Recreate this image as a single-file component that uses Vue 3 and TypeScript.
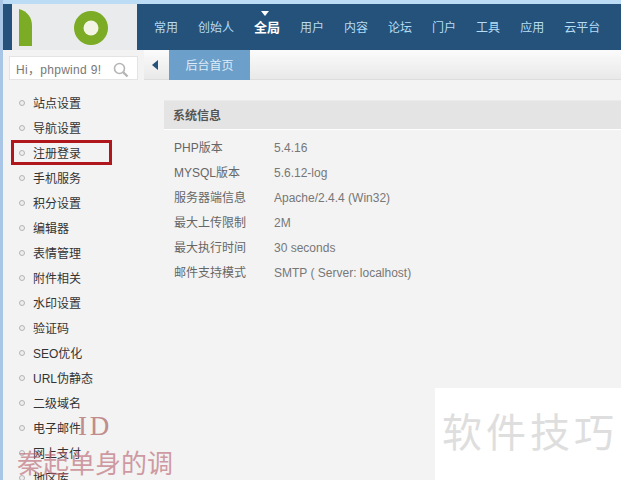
<script setup lang="ts">
const navItems: string[] = ['常用', '创始人', '全局', '用户', '内容', '论坛', '门户', '工具', '应用', '云平台']
const sideItems: string[] = ['站点设置', '导航设置', '注册登录', '手机服务', '积分设置', '编辑器', '表情管理', '附件相关', '水印设置', '验证码', 'SEO优化', 'URL伪静态', '二级域名', '电子邮件', '网上支付', '地区库']
const infoRows: [string, string][] = [
  ['PHP版本', '5.4.16'],
  ['MYSQL版本', '5.6.12-log'],
  ['服务器端信息', 'Apache/2.4.4 (Win32)'],
  ['最大上传限制', '2M'],
  ['最大执行时间', '30 seconds'],
  ['邮件支持模式', 'SMTP ( Server: localhost)'],
]
</script>

<template>
  <div class="page">
    <div class="topline"></div>
    <header class="header">
      <div class="logo">
        <svg width="125" height="46" viewBox="0 0 125 46">
          <path d="M7 5 C15 7 20 13 20 22 V42 H7 Z" fill="#7cab25" />
          <circle cx="79" cy="24" r="17" fill="#7cab25" />
          <circle cx="79" cy="24" r="7.5" fill="#f2f5e6" />
        </svg>
      </div>
      <nav class="nav">
        <a v-for="item in navItems" :key="item" class="nav-item" :class="{ active: item === '全局' }">{{ item }}</a>
      </nav>
    </header>
    <div class="body">
      <aside class="side">
        <div class="search">
          <span class="search-text">Hi，phpwind 9!</span>
          <svg width="16" height="16" viewBox="0 0 16 16" class="search-icon">
            <circle cx="6.5" cy="6.5" r="5" fill="none" stroke="#b5b5b5" stroke-width="1.6" />
            <path d="M10 10 L14.5 14.5" stroke="#b5b5b5" stroke-width="2.4" />
          </svg>
        </div>
        <ul class="menu">
          <li v-for="item in sideItems" :key="item" class="menu-item" :class="{ marked: item === '注册登录' }">
            <i class="dot"></i>{{ item }}
          </li>
        </ul>
      </aside>
      <main class="main">
        <div class="tabs">
          <div class="toggle"><i class="arrow"></i></div>
          <div class="tab">后台首页</div>
        </div>
        <section class="content">
          <h2 class="title">系统信息</h2>
          <dl class="info">
            <div v-for="row in infoRows" :key="row[0]" class="info-row">
              <dt>{{ row[0] }}</dt>
              <dd>{{ row[1] }}</dd>
            </div>
          </dl>
        </section>
      </main>
    </div>
    <div class="mark-id">I D</div>
    <div class="mark-name">秦起单身的调</div>
    <div class="mark-box">软件技巧</div>
  </div>
</template>

<style>
html, body { margin: 0; background: #f3f3f3; overflow: hidden; }
</style>

<style scoped>
.page {
  position: relative;
  width: 621px;
  height: 480px;
  overflow: hidden;
  box-sizing: border-box;
  border-left: 3px solid #a9c6e6;
  background: #f3f3f3;
  font-family: "Liberation Sans", "Noto Sans CJK SC", sans-serif;
  font-size: 12px;
  color: #666;
}
.topline { height: 4px; background: #bcdcf5; margin-left: -3px; }
.header { display: flex; height: 46px; background: #24527a; }
.logo { width: 125px; height: 46px; margin-left: 9px; background: #e9ebed; }
.logo svg { display: block; }
.nav { display: flex; gap: 20px; margin-left: 17px; align-items: center; padding-bottom: 2px; }
.nav-item { color: #b6dcf5; font-size: 12px; white-space: nowrap; position: relative; }
.nav-item.active { color: #fff; font-weight: bold; font-size: 13px; }
.nav-item.active::before {
  content: "";
  position: absolute;
  left: 7px;
  top: -6px;
  border: 4px solid transparent;
  border-top: 5px solid #fff;
  border-bottom: 0;
}
.body { display: flex; }
.side { width: 141px; flex: none; }
.search {
  box-sizing: border-box;
  width: 129px;
  height: 24px;
  margin: 6px 0 0 6px;
  padding: 0 6px;
  background: #fff;
  border: 1px solid #e4e4e4;
  display: flex;
  align-items: center;
  justify-content: space-between;
  color: #777;
  letter-spacing: 0.3px;
}
.search-text { white-space: nowrap; }
.search-icon { flex: none; margin: 3px 2px 0 0; }
.menu { list-style: none; margin: 12px 0 0; padding: 0; }
.menu-item {
  position: relative;
  height: 25px;
  line-height: 25px;
  padding-left: 30px;
  color: #333;
}
.dot {
  position: absolute;
  left: 16px;
  top: 8px;
  box-sizing: border-box;
  width: 6px;
  height: 6px;
  border: 1px solid #b4b4b4;
  border-radius: 50%;
  background: #eee;
}
.marked::after {
  content: "";
  position: absolute;
  left: 8px;
  top: -2px;
  width: 101px;
  height: 25px;
  box-sizing: border-box;
  border: 3px solid #b0171c;
}
.main { flex: 1; min-width: 0; }
.tabs {
  display: flex;
  height: 30px;
  box-sizing: border-box;
  border-bottom: 1px solid #ddd;
  background: linear-gradient(#fbfbfb, #e9e9e9);
}
.toggle { width: 25px; display: flex; align-items: center; padding-left: 8px; box-sizing: border-box; }
.arrow {
  border: 5px solid transparent;
  border-right: 6px solid #24527a;
  border-left: 0;
}
.tab {
  width: 81px;
  height: 30px;
  line-height: 32px;
  text-align: center;
  background: #6c9fc9;
  color: #dcecf8;
}
.content { padding-top: 20px; padding-left: 20px; }
.title {
  margin: 0;
  height: 30px;
  line-height: 30px;
  box-sizing: border-box;
  padding-left: 9px;
  font-size: 12px;
  font-weight: bold;
  color: #555;
  background: #e4e4e4;
  border-top: 1px solid #ebebeb;
  border-bottom: 1px solid #fff;
}
.info { margin: 6px 0 0; padding-left: 10px; }
.info-row { display: flex; height: 25px; line-height: 25px; }
dt { width: 100px; color: #666; }
dd { margin: 0; color: #777; }
.mark-id {
  position: absolute;
  left: 75px;
  top: 411px;
  font-family: "Liberation Serif", serif;
  font-size: 27px;
  color: #b06a6a;
  opacity: 0.75;
  letter-spacing: -2px;
}
.mark-name {
  position: absolute;
  left: 14px;
  top: 448px;
  font-size: 26px;
  line-height: 32px;
  color: #b65f6c;
  opacity: 0.6;
  white-space: nowrap;
}
.mark-box {
  position: absolute;
  left: 432px;
  top: 388px;
  width: 186px;
  height: 92px;
  box-sizing: border-box;
  padding-left: 7px;
  background: #fff;
  color: #dedede;
  font-size: 40px;
  line-height: 91px;
  letter-spacing: 4px;
  white-space: nowrap;
}
</style>
